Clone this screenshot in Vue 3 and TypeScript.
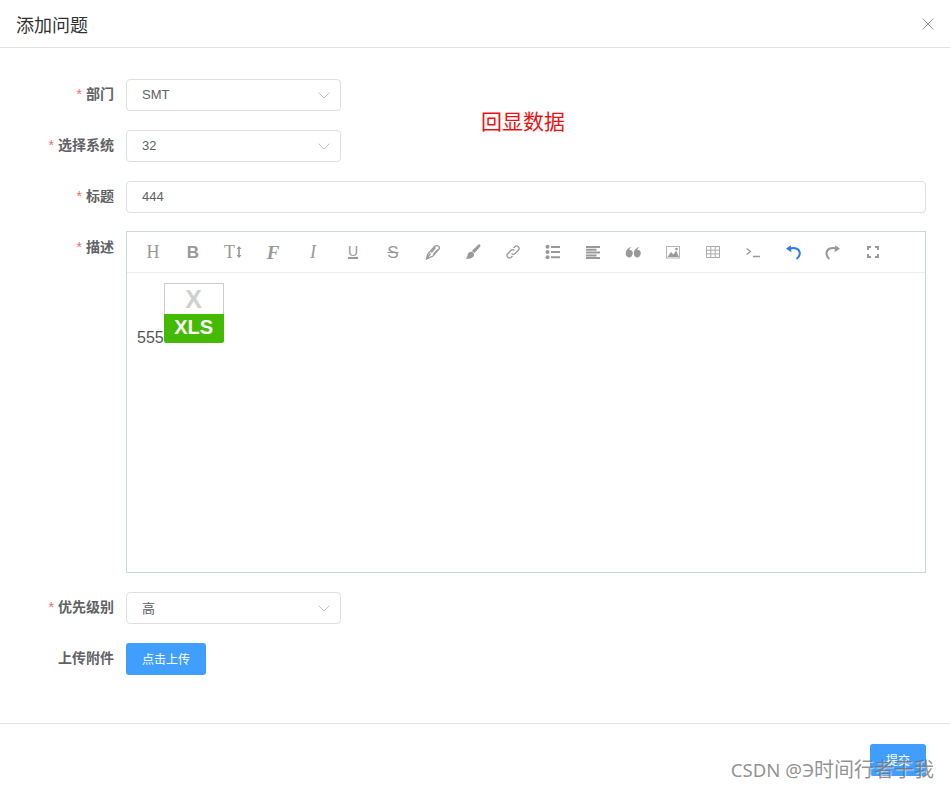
<script setup lang="ts">
import { ref } from 'vue'

const department = ref('SMT')
const system = ref('32')
const title = ref('444')
const priority = ref('高')
</script>

<template>
  <div class="dialog">
    <header class="dialog-header">
      <span class="dialog-title">添加问题</span>
      <svg class="close" width="12" height="12" viewBox="0 0 12 12">
        <path d="M.5.5l11 11M11.500.5l-11 11" />
      </svg>
    </header>

    <main class="dialog-body">
      <div class="form-item">
        <label class="label required">部门</label>
        <div class="select">
          <span>{{ department }}</span>
          <svg width="12" height="7" viewBox="0 0 12 7"><path d="M.5.5L6 6 11.500.5" /></svg>
        </div>
      </div>
      <div class="form-item">
        <label class="label required">选择系统</label>
        <div class="select">
          <span>{{ system }}</span>
          <svg width="12" height="7" viewBox="0 0 12 7"><path d="M.5.5L6 6 11.500.5" /></svg>
        </div>
      </div>
      <div class="form-item title-row">
        <label class="label required">标题</label>
        <input class="input" v-model="title" />
      </div>
      <div class="form-item editor-row">
        <label class="label required">描述</label>
        <div class="editor">
          <div class="toolbar">
            <span class="tool t-h">H</span>
            <span class="tool t-b">B</span>
            <span class="tool t-size">T<svg width="6" height="12" viewBox="0 0 6 12"><path d="M3 0l2.500 3H3.800v6h1.700L3 12 .5 9h1.700V3H.5z" /></svg></span>
            <span class="tool t-f">F</span>
            <span class="tool t-i">I</span>
            <span class="tool t-u">U</span>
            <span class="tool t-s">S</span>
            <span class="tool">
              <svg width="16" height="16" viewBox="0 0 16 16" class="line">
                <path d="M1.500 15l1.300-5 6.700-7.500c1.700-1.500 5.500-.8 4.800 2.200l-6.300 7.300zM1.500 15l4-5.500M6.300 8.500l4.200-5M8.500 10.500l4.300-5" />
              </svg>
            </span>
            <span class="tool">
              <svg width="16" height="16" viewBox="0 0 16 16" class="fill">
                <path d="M14.800.5c.9.500.8 1.500 0 2.400L9.600 9 6.800 7l6-5.700c.7-.7 1.400-1.200 2-.8zM6 7.700c1.900 0 3.400 1.500 3 3.500-.5 2.700-4 4.200-8.500 3.300 1.500-.8 1.800-2 2-3.300.3-2 1.700-3.500 3.500-3.500z" />
              </svg>
            </span>
            <span class="tool">
              <svg width="16" height="16" viewBox="0 0 16 16" class="line">
                <path d="M6.500 9.500a2.500 2.500 0 0 0 3.500 0l3.500-3.500A2.500 2.500 0 0 0 10 2.500L8.500 4M9.500 6.500a2.500 2.500 0 0 0-3.500 0L2.500 10A2.500 2.500 0 0 0 6 13.500L7.500 12" />
              </svg>
            </span>
            <span class="tool">
              <svg width="16" height="16" viewBox="0 0 16 16" class="fill">
                <circle cx="2.500" cy="2.800" r="2" /><circle cx="2.500" cy="8" r="2" /><circle cx="2.500" cy="13.200" r="2" />
                <path d="M6 2h9v2H6zM6 7h9v2H6zM6 12.300h9v2H6z" />
              </svg>
            </span>
            <span class="tool">
              <svg width="16" height="16" viewBox="0 0 16 16" class="fill">
                <path d="M1 2h14v2H1zM1 4.800h10.500v2H1zM1 7.600h14v2H1zM1 10.400h10.500v2H1zM1 13h14v2H1z" />
              </svg>
            </span>
            <span class="tool">
              <svg width="16" height="16" viewBox="0 0 16 16" class="fill">
                <path d="M7.400 2.500C5.200 3.500 4.600 4.800 4.300 6c2.100-.5 3.500 1 3.500 3.100S6.300 13.500 4.300 13.500.8 11.700.8 9.300C.8 6 3.300 3.400 7.400 2.500zM15.400 2.500c-2.200 1-2.800 2.300-3.100 3.500 2.100-.5 3.500 1 3.500 3.100s-1.500 4.400-3.500 4.400-3.500-1.800-3.500-4.200C8.800 6 11.300 3.400 15.400 2.500z" />
              </svg>
            </span>
            <span class="tool">
              <svg width="16" height="16" viewBox="0 0 16 16">
                <path class="fill-path frame" d="M1 2h14v12.500H1zM2 3v10.500h12V3z" />
                <path class="fill-path" d="M2.500 13l3.500-5 2.500 2.500 2.500-4 3 6.500z" />
                <circle class="fill-path" cx="11.500" cy="5" r="1.300" />
              </svg>
            </span>
            <span class="tool">
              <svg width="16" height="16" viewBox="0 0 16 16" class="thin">
                <path d="M1.500 2.500h13v11h-13zM1.500 6.200h13M1.500 9.900h13M5.800 2.500v11M10.200 2.500v11" />
              </svg>
            </span>
            <span class="tool">
              <svg width="16" height="16" viewBox="0 0 16 16" class="line">
                <path d="M1.500 4.500l4 3-4 3M8 12.500h7" />
              </svg>
            </span>
            <span class="tool">
              <svg width="16" height="16" viewBox="0 0 16 16" class="undo">
                <path d="M4.500 4.800C9 2.800 14.800 4.500 14.800 9.500c0 2.300-1.300 4-3.300 5.500" />
                <path class="head" d="M1 4.800l4.800-3.600.6 7z" />
              </svg>
            </span>
            <span class="tool">
              <svg width="16" height="16" viewBox="0 0 16 16" class="redo">
                <path d="M11.500 4.800C7 2.800 1.500 4.500 1.500 9.500c0 2.300 1 4 2.800 5.500" />
                <path class="head" d="M15 4.800l-4.800-3.600-.6 7z" />
              </svg>
            </span>
            <span class="tool">
              <svg width="16" height="16" viewBox="0 0 16 16" class="fill">
                <path d="M2 2h4v2H4v2H2zM10 2h4v4h-2V4h-2zM2 10h2v2h2v2H2zM12 10h2v4h-4v-2h2z" />
              </svg>
            </span>
          </div>
          <div class="editor-content">555<span class="xls"><span class="xls-top">X</span><span class="xls-bottom">XLS</span></span></div>
        </div>
      </div>
      <div class="form-item">
        <label class="label required">优先级别</label>
        <div class="select">
          <span>{{ priority }}</span>
          <svg width="12" height="7" viewBox="0 0 12 7"><path d="M.5.5L6 6 11.500.5" /></svg>
        </div>
      </div>
      <div class="form-item last">
        <label class="label">上传附件</label>
        <button class="btn">点击上传</button>
      </div>
    </main>

    <footer class="dialog-footer">
      <button class="btn submit">提交</button>
    </footer>

    <span class="annotation">回显数据</span>
    <span class="watermark"><span class="wm-latin">CSDN @Э</span>时间行者于我</span>
  </div>
</template>

<style>
html,
body {
  margin: 0;
  background: #fff;
}
</style>

<style scoped>
.dialog {
  position: relative;
  height: 789px;
  overflow: hidden;
  display: flex;
  flex-direction: column;
  box-sizing: border-box;
  background: #fff;
  font-family: "Liberation Sans", "Noto Sans CJK SC", sans-serif;
  color: #606266;
}

.dialog-header {
  height: 47px;
  flex: none;
  box-sizing: content-box;
  display: flex;
  align-items: center;
  justify-content: space-between;
  padding: 0 16px;
  border-bottom: 1px solid #e0e2e7;
}
.dialog-title {
  font-size: 18px;
  color: #303133;
}
.close path {
  stroke: #909399;
  fill: none;
}

.dialog-body {
  flex: 1;
  padding: 31px 24px 0 0;
}
.form-item {
  display: flex;
  margin-bottom: 19px;
}
.form-item.title-row {
  margin-bottom: 18px;
}
.form-item.last {
  margin-bottom: 48px;
}
.label {
  width: 114px;
  flex: none;
  margin-right: 12px;
  text-align: right;
  font-size: 14px;
  font-weight: 700;
  line-height: 30px;
  color: #606266;
}
.editor-row .label {
  line-height: 32px;
}
.required::before {
  content: "*";
  color: #f56c6c;
  margin-right: 4px;
  font-weight: 400;
}

.select {
  width: 215px;
  height: 32px;
  box-sizing: border-box;
  border: 1px solid #dcdfe6;
  border-radius: 4px;
  padding: 0 10px 2px 15px;
  display: flex;
  align-items: center;
  justify-content: space-between;
  font-size: 13px;
}
.select svg {
  margin-top: 2px;
}
.select path {
  stroke: #c0c4cc;
  fill: none;
}
.input {
  flex: 1;
  height: 32px;
  box-sizing: border-box;
  border: 1px solid #dcdfe6;
  border-radius: 4px;
  padding: 0 15px 2px;
  font-family: inherit;
  font-size: 13px;
  color: #606266;
  outline: none;
}

.editor {
  flex: 1;
  height: 342px;
  box-sizing: border-box;
  border: 1px solid #c9d8db;
  display: flex;
  flex-direction: column;
}
.toolbar {
  height: 41px;
  flex: none;
  box-sizing: border-box;
  border-bottom: 1px solid #eeeeee;
  padding-left: 6px;
  display: flex;
  align-items: center;
}
.tool {
  width: 40px;
  height: 40px;
  flex: none;
  display: flex;
  align-items: center;
  justify-content: center;
  font-family: "Liberation Serif", serif;
  font-size: 18px;
  line-height: 1;
  color: #999;
}
.t-b {
  font-family: "Liberation Sans", sans-serif;
  font-size: 17px;
  font-weight: 700;
}
.t-size svg {
  margin-left: 1px;
  fill: #999;
}
.t-f {
  font-style: italic;
  font-weight: 700;
  font-size: 19px;
}
.t-i {
  font-style: italic;
}
.t-u {
  font-family: "Liberation Sans", sans-serif;
  font-size: 14px;
  padding-bottom: 3px;
  box-sizing: border-box;
  text-decoration: underline;
  text-decoration-thickness: 2px;
  text-underline-offset: 1px;
}
.t-s {
  font-family: "Liberation Sans", sans-serif;
  font-size: 17px;
  text-decoration: line-through;
}
.line path {
  fill: none;
  stroke: #999;
  stroke-width: 1.300;
}
.thin path {
  fill: none;
  stroke: #aaa;
  stroke-width: 1;
}
.fill {
  fill: #999;
}
.fill-path {
  fill: #999;
  fill-rule: evenodd;
}
.frame {
  fill: #b5b5b5;
}
.undo path {
  fill: none;
  stroke: #2b7de0;
  stroke-width: 2;
}
.undo .head {
  fill: #2b7de0;
  stroke: none;
}
.redo path {
  fill: none;
  stroke: #999;
  stroke-width: 2;
}
.redo .head {
  fill: #999;
  stroke: none;
}

.editor-content {
  flex: 1;
  padding: 10px;
  font-size: 16px;
  line-height: 1.6;
  color: #555;
}
.xls {
  display: inline-block;
  width: 60px;
  height: 60px;
  overflow: hidden;
  border-radius: 0 0 2px 2px;
}
.xls-top {
  display: block;
  height: 31px;
  box-sizing: border-box;
  border: 1px solid #ccc;
  border-bottom: none;
  text-align: center;
  font-size: 25px;
  font-weight: 700;
  line-height: 30px;
  color: #d0d0d0;
}
.xls-bottom {
  display: block;
  height: 29px;
  background: #44bb00;
  color: #fff;
  text-align: center;
  font-size: 20px;
  font-weight: 700;
  line-height: 27px;
}

.btn {
  height: 32px;
  padding: 0 16px 2px;
  border: none;
  border-radius: 3px;
  background: #409eff;
  color: #fff;
  font-family: inherit;
  font-size: 12px;
}

.dialog-footer {
  flex: none;
  height: 66px;
  box-sizing: border-box;
  border-top: 1px solid #e0e2e7;
  padding: 20px 24px 0 0;
  display: flex;
  justify-content: flex-end;
  align-items: flex-start;
}

.annotation {
  position: absolute;
  left: 481px;
  top: 107px;
  font-size: 21px;
  line-height: 30px;
  color: #f01010;
}
.watermark {
  position: absolute;
  right: 16px;
  top: 756px;
  font-family: "Noto Sans", "Noto Sans CJK SC", sans-serif;
  font-size: 20px;
  line-height: 28px;
  color: rgba(110, 110, 110, 0.75);
  text-shadow: 1px 1px 1px rgba(255, 255, 255, 0.6);
}
.wm-latin {
  font-size: 18.6px;
}
</style>
